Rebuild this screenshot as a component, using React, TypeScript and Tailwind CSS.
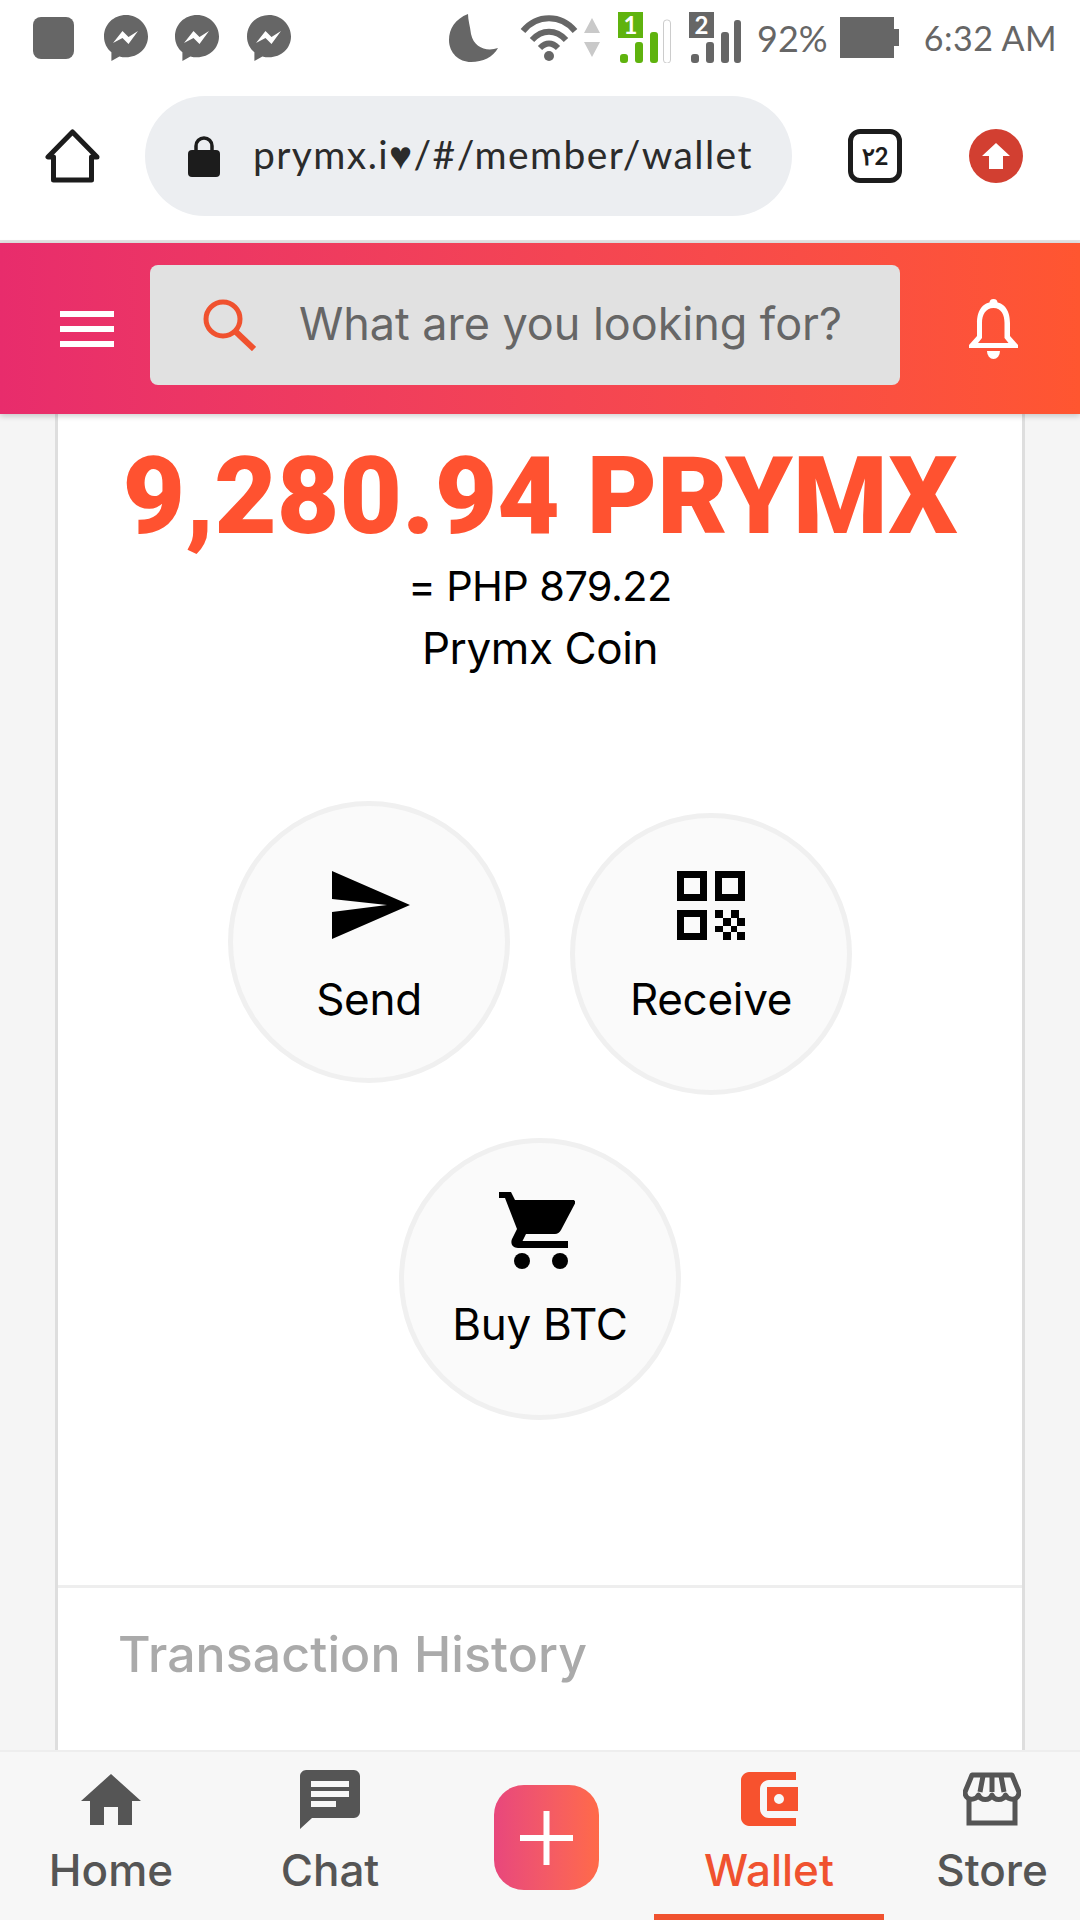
function Messenger({ className }: { className?: string }) {
  return (
    <svg className={className} viewBox="0 0 46 48" fill="#666666">
      <path d="M23 1C10.500 1 1 10.500 1 22.500c0 6.500 2.800 12 7.400 15.800V47l8-4.600c2 .6 4.300.9 6.600.9 12.500 0 22-9.300 22-20.800S35.500 1 23 1z" />
      <path d="M10 29l9.500-12 6 6 9.500-6-9.500 13-6-6z" fill="#ffffff" />
    </svg>
  )
}

function SignalBars({ sim, active }: { sim: string; active: boolean }) {
  const color = active ? '#5fb30e' : '#666666'
  return (
    <div className="relative w-[53px] h-[51px]">
      <svg className="w-full h-full" viewBox="0 0 53 51">
        <rect x="2" y="42" width="8" height="9" rx="3" fill={color} />
        <rect x="17" y="30" width="8" height="21" rx="3" fill={color} />
        <rect x="32" y="20" width="8" height="31" rx="3" fill={color} />
        <rect x={active ? 45.5 : 45} y="8" width="7" height="43" rx="3" fill={active ? '#ffffff' : color} stroke={active ? '#cccccc' : 'none'} />
      </svg>
      <span className="absolute top-0 left-0 w-[25px] h-[26px] flex items-center justify-center text-white text-[24px] font-bold leading-none" style={{ backgroundColor: color }}>
        {sim}
      </span>
    </div>
  )
}

function StatusBar() {
  return (
    <div className="h-[75px] flex items-center pl-[33px] pr-[26px] text-[#666666] font-['Lato',sans-serif]">
      <div className="w-[41px] h-[42px] rounded-[8px] bg-[#666666]" />
      <Messenger className="w-[46px] h-[48px] ml-[29px]" />
      <Messenger className="w-[46px] h-[48px] ml-[25px]" />
      <Messenger className="w-[46px] h-[48px] ml-[26px]" />
      <svg className="w-[49px] h-[48px] ml-[157px]" viewBox="0 0 49 48" fill="#666666">
        <path d="M19 0C6 5 0 15 0 26c0 13 10 22 22 22 12 0 22-5 27-14C38 38 25 34 22 20 21 12 19 6 19 0z" />
      </svg>
      <svg className="w-[58px] h-[48px] ml-[22px]" viewBox="0 0 58 48" fill="none" stroke="#666666" strokeWidth="6">
        <path d="M3 17C17 0 41 0 55 17" />
        <path d="M12 26c10-11 24-11 34 0" />
        <path d="M20 34c6-6 12-6 18 0" />
        <circle cx="29" cy="42" r="5" fill="#666666" stroke="none" />
      </svg>
      <svg className="w-[16px] h-[39px] ml-[6px]" viewBox="0 0 16 39" fill="#c9c9c9">
        <path d="M8 0l8 15H0z" />
        <path d="M8 39l8-15H0z" />
      </svg>
      <div className="ml-[18px]"><SignalBars sim="1" active /></div>
      <div className="ml-[18px]"><SignalBars sim="2" active={false} /></div>
      <span className="ml-[15px] text-[36px] leading-none">92%</span>
      <div className="ml-[12px] flex items-center">
        <div className="w-[54px] h-[41px] bg-[#666666]" />
        <div className="w-[5px] h-[17px] bg-[#666666]" />
      </div>
      <span className="ml-auto mr-[-3px] text-[34px] leading-none tracking-[0.5px]">6:32 AM</span>
    </div>
  )
}

function BrowserBar() {
  return (
    <div className="h-[168px] flex items-start pt-[21px] bg-white border-b-[3px] border-[#e4e4e4]">
      <svg className="w-[55px] h-[54px] ml-[45px] mt-[33px]" viewBox="0 0 55 54" fill="none" stroke="#1c1c1c" strokeWidth="5" strokeLinejoin="round">
        <path d="M27.5 3L3 28h5.500v23h38V28H52z" />
      </svg>
      <div className="ml-[45px] w-[647px] h-[120px] rounded-[60px] bg-[#eceef1] flex items-center pl-[43px]">
        <svg className="w-[32px] h-[42px]" viewBox="0 0 32 42">
          <path d="M8 18v-7a8 8 0 0116 0v7" fill="none" stroke="#1c1c1c" strokeWidth="3.5" />
          <rect x="0" y="15" width="32" height="27" rx="4" fill="#1c1c1c" />
        </svg>
        <span className="ml-[33px] mb-[4px] text-[39px] leading-none text-[#2b2b2b] font-['Lato',sans-serif] tracking-[1.4px] whitespace-nowrap">
          prymx.i♥/#/member/wallet
        </span>
      </div>
      <div className="ml-[56px] mt-[33px] w-[54px] h-[54px] rounded-[12px] border-[5px] border-[#1c1c1c] flex items-center justify-center text-[24px] font-bold text-[#1c1c1c] font-['Lato',sans-serif]">
        ٢2
      </div>
      <div className="ml-[67px] mt-[33px] w-[54px] h-[54px] rounded-full bg-[#d23f31] flex items-center justify-center">
        <svg className="w-[28px] h-[26px]" viewBox="0 0 28 26" fill="#ffffff">
          <path d="M14 0l14 13h-7v13H7V13H0z" />
        </svg>
      </div>
    </div>
  )
}

function SearchHeader() {
  return (
    <div className="relative z-10 h-[171px] flex items-center bg-gradient-to-r from-[#e82c6c] to-[#ff5630] shadow-[0_2px_6px_rgba(0,0,0,0.2)]">
      <div className="ml-[60px] w-[54px] flex flex-col gap-[9px]">
        <div className="h-[6px] bg-white" />
        <div className="h-[6px] bg-white" />
        <div className="h-[6px] bg-white" />
      </div>
      <div className="ml-[36px] mb-[8px] w-[750px] h-[120px] rounded-[8px] bg-[#e1e1e1] flex items-center pl-[53px]">
        <svg className="w-[53px] h-[52px]" viewBox="0 0 53 52" fill="none" stroke="#f0522f" strokeWidth="5">
          <circle cx="20" cy="20" r="17" />
          <path d="M32 32l19 18" strokeWidth="6" />
        </svg>
        <span className="ml-[43px] mb-[2px] text-[45px] leading-none text-[#666666] font-['Inter',sans-serif] tracking-[-0.05px] whitespace-nowrap">
          What are you looking for?
        </span>
      </div>
      <svg className="ml-[68px] w-[51px] h-[60px]" viewBox="0 0 51 60" fill="#ffffff">
        <circle cx="25.5" cy="4" r="4" />
        <path d="M25.5 3C13.500 3 9 13 9 24v13L1 46v3h49v-3l-8-9V24C42 13 37.500 3 25.500 3zm0 6c8 0 11 7 11 15v15l4 5H10l4-5V24c0-8 3.500-15 11.500-15z" fillRule="evenodd" />
        <path d="M19 52h13a6.500 8 0 01-13 0z" />
      </svg>
    </div>
  )
}

function ActionCircle({ label, icon, className }: { label: string; icon: React.ReactNode; className?: string }) {
  return (
    <div className={`w-[282px] h-[282px] rounded-full border-[5px] border-[#f0f0f0] bg-[#fafafa] flex flex-col items-center ${className ?? ''}`}>
      <div className="h-[70px] flex items-center justify-center">{icon}</div>
      <span className="mt-[34px] text-[44px] leading-[50px] text-black font-['Inter',sans-serif] tracking-[-0.3px]">{label}</span>
    </div>
  )
}

function WalletCard() {
  return (
    <div className="mx-[55px] h-[1336px] bg-white border-x-[3px] border-[#dedede] flex flex-col overflow-hidden">
      <div className="pt-[17px] text-center">
        <div className="text-[108px] leading-[130px] font-black text-[#ff5230] font-['Roboto',sans-serif] whitespace-nowrap">
          9,280.94 PRYMX
        </div>
        <div className="mt-[-6px] text-[41.5px] leading-[62px] text-black font-['Inter',sans-serif] tracking-[-0.6px]">= PHP 879.22</div>
        <div className="text-[44px] leading-[62px] text-black font-['Inter',sans-serif] tracking-[-0.4px]">Prymx Coin</div>
      </div>
      <div className="mt-[122px] flex justify-center gap-[60px]">
        <ActionCircle
          className="pt-[64px]"
          label="Send"
          icon={
            <svg className="w-[78px] h-[68px] ml-[4px]" viewBox="0 0 78 68" fill="#000000">
              <path d="M0 0l78 34L0 68V41l55-7L0 28z" />
            </svg>
          }
        />
        <ActionCircle
          className="mt-[12px] pt-[52px]"
          label="Receive"
          icon={
            <svg className="w-[68px] h-[69px]" viewBox="0 0 68 69" fill="#000000">
              <path fillRule="evenodd" d="M0 0h30v30H0zM7 7v16h16V7zM38 0h30v30H38zM45 7v16h16V7zM0 39h30v30H0zM7 46v16h16V46z" />
              <path d="M38 39h8v8h-8zM54 39h8v8h-8zM46 47h8v8h-8zM60 47h8v8h-8zM38 55h8v6h-8zM54 55h6v6h-6zM46 61h8v8h-8zM60 61h8v8h-8z" />
            </svg>
          }
        />
      </div>
      <div className="mt-[43px] flex justify-center">
        <ActionCircle
          className="pt-[52px]"
          label="Buy BTC"
          icon={
            <svg className="w-[76px] h-[77px] mr-[7px]" viewBox="0 0 76 77" fill="#000000">
              <path d="M0 0h12l4 8h58c2 0 2.500 2 2 3.500L62 38c-1.500 2.500-3.500 4-6 4H27l-3.500 7H69v7H19c-5 0-8-4-6-9l5-10L6 6H0z" />
              <circle cx="23" cy="69" r="8" />
              <circle cx="61" cy="69" r="8" />
            </svg>
          }
        />
      </div>
      <div className="mt-[165px] border-t-[3px] border-[#eeeeee] pt-[38px] pl-[60px]">
        <span className="text-[50px] leading-[56px] text-[#aaaaaa] font-['Inter',sans-serif] font-medium tracking-[0.1px]">Transaction History</span>
      </div>
    </div>
  )
}

function NavItem({ label, icon, width, active, className }: { label: string; icon: React.ReactNode; width: string; active?: boolean; className?: string }) {
  return (
    <div className={`relative h-full flex flex-col items-center ${width} ${className ?? ''}`}>
      <div className="h-[60px] mt-[17px] flex items-center justify-center">{icon}</div>
      <span className={`mt-[16px] text-[44px] leading-[50px] font-medium font-['Inter',sans-serif] ${active ? 'text-[#f0522f]' : 'text-[#555555]'}`}>
        {label}
      </span>
      {active && <div className="absolute bottom-0 left-0 right-0 h-[6px] bg-[#f0522f]" />}
    </div>
  )
}

function BottomNav() {
  return (
    <div className="h-[170px] bg-[#f7f7f7] flex border-t-[2px] border-[#eeeeee]">
      <NavItem
        label="Home"
        width="w-[222px]"
        icon={
          <svg className="w-[60px] h-[51px]" viewBox="0 0 60 51" fill="#555555">
            <path d="M30 0l30 27h-9v24H37V33H23v18H9V27H0z" />
          </svg>
        }
      />
      <NavItem
        label="Chat"
        width="w-[216px]"
        icon={
          <svg className="w-[60px] h-[59px]" viewBox="0 0 60 59" fill="#555555">
            <path fillRule="evenodd" d="M6 0h48c3 0 6 3 6 6v36c0 3-3 6-6 6H12L0 59V6c0-3 3-6 6-6zM11 11v6h38v-6zM11 21v6h38v-6zM11 31v6h25v-6z" />
          </svg>
        }
      />
      <div className="w-[216px] flex justify-center pt-[33px]">
        <div className="w-[105px] h-[105px] rounded-[30px] bg-gradient-to-r from-[#e8477c] to-[#ff6a48] flex items-center justify-center">
          <svg className="w-[53px] h-[54px]" viewBox="0 0 53 54" fill="#ffffff">
            <path d="M23.5 0h6v24H53v6H29.500v24h-6V30H0v-6h23.500z" />
          </svg>
        </div>
      </div>
      <NavItem
        label="Wallet"
        width="w-[230px]"
        active
        icon={
          <svg className="w-[57px] h-[54px]" viewBox="0 0 57 54" fill="#f7522e">
            <path fillRule="evenodd" d="M8 0h47v8H28c-5 0-9 4-9 9v20c0 5 4 9 9 9h27v8H8c-4 0-8-4-8-8V8c0-4 4-8 8-8z" />
            <path fillRule="evenodd" d="M26 15h31v24H26zM38 22a5 5 0 100 10 5 5 0 000-10z" />
          </svg>
        }
      />
      <NavItem
        label="Store"
        width="w-[196px]"
        className="pl-[20px]"
        icon={
          <svg className="w-[58px] h-[54px]" viewBox="0 0 58 54" fill="none" stroke="#555555" strokeWidth="5">
            <path d="M9 3h40l7 17c0 9-11 9-13.500 3-2.500 6-11 6-13.500 0-2.500 6-11 6-13.500 0C13 29 2 29 2 20z" strokeLinejoin="round" />
            <path d="M20 4l-3 16M29 4v16M38 4l3 16" />
            <path d="M6 27v24h46V27" />
          </svg>
        }
      />
    </div>
  )
}

export default function App() {
  return (
    <div className="w-[1080px] h-[1920px] overflow-hidden flex flex-col bg-[#f5f5f5]">
      <div className="bg-white">
        <StatusBar />
      </div>
      <BrowserBar />
      <SearchHeader />
      <WalletCard />
      <BottomNav />
    </div>
  )
}
